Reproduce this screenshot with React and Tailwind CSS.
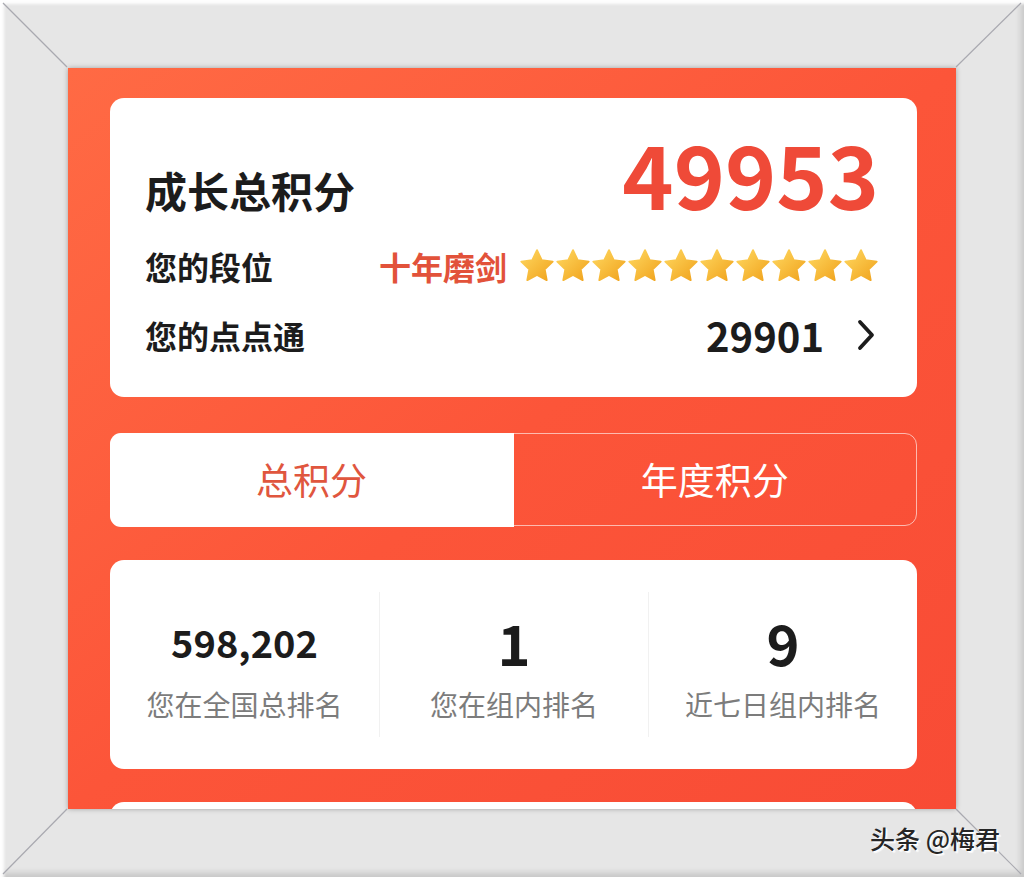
const stats = [
  { value: "598,202", label: "您在全国总排名", big: false },
  { value: "1", label: "您在组内排名", big: true },
  { value: "9", label: "近七日组内排名", big: true },
];

// 金色星星
const Star = ({ id }) => (
  <svg width="36" height="36" viewBox="0.4 0.4 23.2 23.2">
    <defs>
      <linearGradient id={id} x1="0" y1="0" x2="1" y2="1">
        <stop offset="0" stopColor="#ffd860" />
        <stop offset="1" stopColor="#f0a21c" />
      </linearGradient>
    </defs>
    <path
      d="M12 1.8l3.05 6.45 7.05.95-5.15 4.9 1.3 7L12 17.7l-6.25 3.4 1.3-7L1.9 9.2l7.05-.95z"
      fill={`url(#${id})`}
      stroke={`url(#${id})`}
      strokeWidth="1.2"
      strokeLinejoin="round"
    />
  </svg>
);

const App = () => {
  return (
    <div className="relative w-[1024px] h-[877px] overflow-hidden bg-[#e6e6e6] p-[68px] font-['Noto_Sans_CJK_SC','Noto_Sans',sans-serif] shadow-[inset_4px_4px_3px_rgba(255,255,255,0.95),inset_-3px_-4px_6px_rgba(0,0,0,0.14)]">
      {/* 画框的斜角线 */}
      <svg
        className="absolute inset-0 pointer-events-none"
        width="1024"
        height="877"
      >
        <line x1="3" y1="3" x2="67" y2="67" stroke="#a9a9b0" strokeWidth="1.2" />
        <line x1="1021" y1="3" x2="956" y2="67" stroke="#a9a9b0" strokeWidth="1.2" />
        <line x1="3" y1="874" x2="67" y2="809" stroke="#a9a9b0" strokeWidth="1.2" />
        <line x1="1021" y1="874" x2="956" y2="809" stroke="#a9a9b0" strokeWidth="1.2" />
      </svg>

      {/* 橙色背景区 */}
      <div className="h-full w-full overflow-hidden bg-gradient-to-br from-[#ff6a44] via-[#fc5539] to-[#f84b35] pl-[42px] pr-[39px] pt-[30px] shadow-[0_0_5px_rgba(0,0,0,0.3)]">
        {/* 成长总积分 */}
        <div className="h-[299px] rounded-[14px] bg-white pl-[35px] pr-[38px] pt-[30px]">
          <div className="flex items-start justify-between">
            <span className="mt-[30px] text-[42px] font-bold text-[#1c1c1c]">
              成长总积分
            </span>
            <span className="text-[87px] leading-[88px] font-bold text-[#ef4a38]">
              49953
            </span>
          </div>
          <div className="mt-[23px] flex h-[44px] items-center justify-between">
            <span className="text-[32px] font-bold text-[#1c1c1c]">您的段位</span>
            <div className="flex items-center gap-[12px]">
              <span className="text-[32px] font-bold text-[#e2523a]">十年磨剑</span>
              <div className="flex">
                {Array.from({ length: 10 }).map((_, i) => (
                  <Star key={i} id={`star-${i}`} />
                ))}
              </div>
            </div>
          </div>
          <div className="mt-[25px] flex h-[44px] items-center justify-between">
            <span className="text-[32px] font-bold text-[#1c1c1c]">您的点点通</span>
            <div className="flex items-center gap-[32px]">
              <span className="text-[40px] font-bold text-[#1c1c1c]">29901</span>
              <svg width="20" height="32" viewBox="0 0 20 32" className="mr-[3px]">
                <polyline
                  points="4,3 16,16 4,29"
                  fill="none"
                  stroke="#1c1c1c"
                  strokeWidth="3.8"
                  strokeLinecap="round"
                  strokeLinejoin="round"
                />
              </svg>
            </div>
          </div>
        </div>

        {/* 切换标签 */}
        <div className="mt-[36px] flex h-[93px] rounded-[12px] border-[1.5px] border-white/60">
          <div className="flex w-[404px] items-center justify-center rounded-l-[11px] bg-white -m-[1.5px] mr-0">
            <span className="text-[37px] text-[#e0563e]">总积分</span>
          </div>
          <div className="flex flex-1 items-center justify-center">
            <span className="text-[37px] text-white">年度积分</span>
          </div>
        </div>

        {/* 排名 */}
        <div className="mt-[34px] grid h-[209px] grid-cols-3 rounded-[14px] bg-white py-[32px]">
          {stats.map((s, i) => (
            <div
              key={s.label}
              className={`flex flex-col items-center justify-center pt-[8px] ${
                i > 0 ? "border-l border-[#f1f1f1]" : ""
              }`}
            >
              <div className="flex h-[60px] items-center">
                <span
                  className={
                    s.big
                      ? "text-[56px] font-bold leading-none text-[#1c1c1c]"
                      : "text-[38px] font-bold leading-none text-[#1c1c1c]"
                  }
                >
                  {s.value}
                </span>
              </div>
              <span className="mt-[11px] text-[28px] text-[#7c7c7c]">{s.label}</span>
            </div>
          ))}
        </div>

        <div className="mt-[33px] h-[120px] rounded-[14px] bg-white" />
      </div>

      {/* 水印 */}
      <div className="absolute right-[24px] bottom-[20px] text-[25px] font-medium text-[#262626] [text-shadow:1px_1px_0_#ffffff,2px_2px_1px_rgba(255,255,255,0.8)]">
        头条 @梅君
      </div>
    </div>
  );
};

export default App;
